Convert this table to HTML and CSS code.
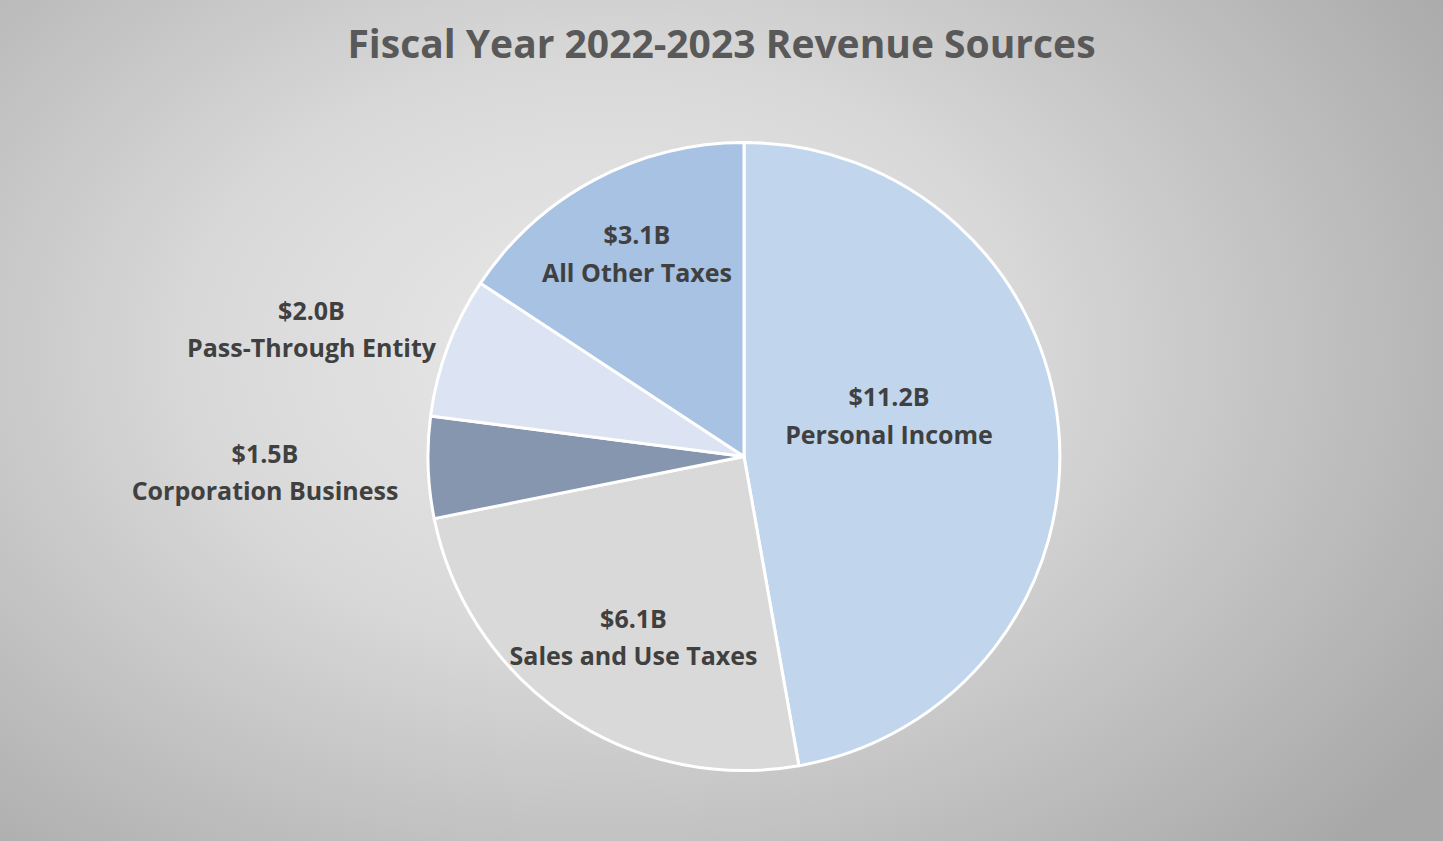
FILE: index.html
```html
<!DOCTYPE html>
<html lang="en">
<head>
<meta charset="utf-8">
<title>Fiscal Year 2022-2023 Revenue Sources</title>
<link rel="stylesheet" href="styles.css">
</head>
<body>
<main class="slide">
  <h1 class="title">Fiscal Year 2022-2023 Revenue Sources</h1>
  <div class="chart">
    <svg class="pie" viewBox="0 90 1443 751" width="1443" height="751" xmlns="http://www.w3.org/2000/svg">
      <g class="slices">
        <path class="s-pi" d="M744 456.5 L744 142.5 A316 314 0 0 1 798.9 765.7 Z"/>
        <path class="s-sales" d="M744 456.5 L798.9 765.7 A316 314 0 0 1 434.2 518.6 Z"/>
        <path class="s-corp" d="M744 456.5 L434.2 518.6 A316 314 0 0 1 430.6 416.1 Z"/>
        <path class="s-pass" d="M744 456.5 L430.6 416.1 A316 314 0 0 1 480.5 283.2 Z"/>
        <path class="s-other" d="M744 456.5 L480.5 283.2 A316 314 0 0 1 744 142.5 Z"/>
      </g>
      <g class="labels">
        <text class="lbl" x="637" y="243.5">$3.1B</text>
        <text class="lbl" x="637" y="281.7">All Other Taxes</text>
        <text class="lbl" x="311.5" y="319.5">$2.0B</text>
        <text class="lbl" x="311.5" y="356.5">Pass-Through Entity</text>
        <text class="lbl" x="265" y="462.7">$1.5B</text>
        <text class="lbl" x="265" y="500">Corporation Business</text>
        <text class="lbl" x="889" y="406">$11.2B</text>
        <text class="lbl" x="889" y="444">Personal Income</text>
        <text class="lbl" x="633.5" y="628.3">$6.1B</text>
        <text class="lbl" x="633.5" y="665">Sales and Use Taxes</text>
      </g>
    </svg>
  </div>
</main>
</body>
</html>
```
FILE: styles.css
```css
html, body {
  margin: 0;
  padding: 0;
}
body {
  width: 1443px;
  height: 841px;
  overflow: hidden;
  font-family: "Open Sans", Lato, "Liberation Sans", sans-serif;
}
.slide {
  width: 1443px;
  height: 841px;
  display: flex;
  flex-direction: column;
  align-items: center;
  background: radial-gradient(ellipse 70% 85% at 42% 42%, #e9e9e9 0%, #d9d9d9 40%, #a8a8a8 100%);
}
.title {
  margin: 0;
  height: 90px;
  box-sizing: border-box;
  padding-top: 18px;
  font-size: 39px;
  line-height: 50px;
  font-weight: 700;
  color: #595959;
  text-align: center;
}
.chart {
  width: 1443px;
  height: 751px;
}
.pie {
  display: block;
}
.slices path {
  stroke: #ffffff;
  stroke-width: 3;
  stroke-linejoin: round;
}
.s-pi { fill: #c1d6ec; }
.s-sales { fill: #d9d9d9; }
.s-corp { fill: #8696ae; }
.s-pass { fill: #dce3f3; }
.s-other { fill: #a7c2e2; }
.lbl {
  font-family: "Open Sans", Lato, "Liberation Sans", sans-serif;
  font-size: 25px;
  font-weight: 700;
  fill: #404040;
  text-anchor: middle;
}
```
